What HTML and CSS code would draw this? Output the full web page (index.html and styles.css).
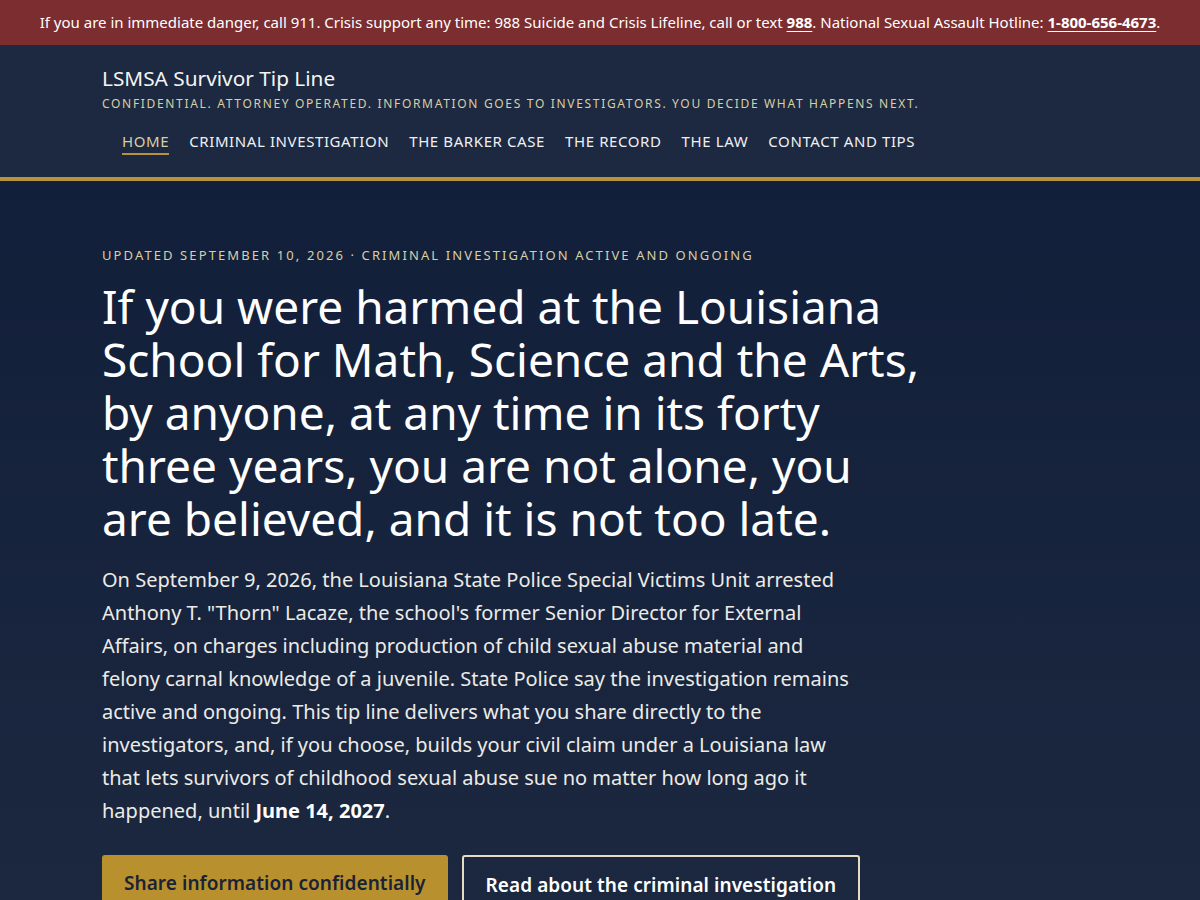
FILE: index.html
```html
<!DOCTYPE html>
<html lang="en">
<head>
<meta charset="utf-8">
<title>LSMSA Survivor Tip Line</title>
<link rel="stylesheet" href="styles.css">
</head>
<body>
<div class="crisis">
  If you are in immediate danger, call 911. Crisis support any time: 988 Suicide and Crisis Lifeline, call or text <a href="#">988</a>. National Sexual Assault Hotline: <a href="#">1-800-656-4673</a>.
</div>
<header class="site-header">
  <div class="container">
    <div class="site-title">LSMSA Survivor Tip Line</div>
    <div class="tagline">Confidential. Attorney operated. Information goes to investigators. You decide what happens next.</div>
    <nav class="main-nav">
      <ul>
        <li><a class="active" href="#">Home</a></li>
        <li><a href="#">Criminal Investigation</a></li>
        <li><a href="#">The Barker Case</a></li>
        <li><a href="#">The Record</a></li>
        <li><a href="#">The Law</a></li>
        <li><a href="#">Contact and Tips</a></li>
      </ul>
    </nav>
  </div>
</header>
<main class="hero">
  <div class="container">
    <p class="eyebrow">Updated September 10, 2026 · Criminal investigation active and ongoing</p>
    <h1>If you were harmed at the Louisiana School for Math, Science and the Arts, by anyone, at any time in its forty three years, you are not alone, you are believed, and it is not too late.</h1>
    <p class="lead">On September 9, 2026, the Louisiana State Police Special Victims Unit arrested Anthony T. "Thorn" Lacaze, the school's former Senior Director for External Affairs, on charges including production of child sexual abuse material and felony carnal knowledge of a juvenile. State Police say the investigation remains active and ongoing. This tip line delivers what you share directly to the investigators, and, if you choose, builds your civil claim under a Louisiana law that lets survivors of childhood sexual abuse sue no matter how long ago it happened, until <strong>June 14, 2027</strong>.</p>
    <div class="actions">
      <a class="btn btn-primary" href="#">Share information confidentially</a>
      <a class="btn btn-outline" href="#">Read about the criminal investigation</a>
    </div>
  </div>
</main>
</body>
</html>
```

FILE: styles.css
```css
* { box-sizing: border-box; }
html, body { margin: 0; padding: 0; }
body {
  font-family: "Noto Sans", "Open Sans", "DejaVu Sans", sans-serif;
  background: #1d2940;
  color: #ffffff;
}
.crisis {
  background: #7b2d2f;
  color: #ffffff;
  text-align: center;
  font-size: 15px;
  line-height: 22px;
  padding: 11px 16px 12px;
}
.crisis a {
  color: #ffffff;
  font-weight: 700;
  text-decoration: underline;
  text-underline-offset: 3px;
}
.container {
  max-width: 996px;
  margin: 0 auto;
}
.site-header {
  background: #1d2940;
  border-bottom: 4px solid #b8923a;
  padding: 19px 0 22px;
}
.site-title {
  font-size: 20.8px;
  line-height: 28px;
  color: #f4f4f4;
}
.tagline {
  margin-top: 3px;
  font-size: 12px;
  line-height: 18px;
  letter-spacing: 1.68px;
  text-transform: uppercase;
  color: #d8cfa6;
}
.main-nav ul {
  list-style: none;
  margin: 17px 0 0;
  padding: 0 0 0 20px;
  display: flex;
  gap: 20px;
}
.main-nav a {
  display: block;
  font-size: 15px;
  line-height: 22px;
  letter-spacing: 0.6px;
  text-transform: uppercase;
  color: #eef0f4;
  text-decoration: none;
  padding-bottom: 1px;
  border-bottom: 2px solid transparent;
}
.main-nav a.active {
  color: #d8cfa6;
  border-bottom-color: #b8923a;
}
.hero {
  background: linear-gradient(180deg, #121f3a 0%, #1d2940 100%);
  padding: 64px 0 80px;
  min-height: 800px;
}
.eyebrow {
  margin: 0;
  font-size: 13px;
  line-height: 20px;
  letter-spacing: 2.1px;
  text-transform: uppercase;
  color: #d8cfa6;
}
h1 {
  margin: 15px 0 0;
  max-width: 822px;
  font-size: 46px;
  line-height: 53px;
  font-weight: 400;
  color: #ffffff;
}
.lead {
  margin: 18px 0 0;
  max-width: 762px;
  font-size: 20px;
  line-height: 33px;
  color: #ecebe6;
}
.lead strong { color: #ffffff; font-weight: 700; }
.actions {
  display: flex;
  gap: 14px;
  margin-top: 28px;
}
.btn {
  display: inline-block;
  font-size: 19px;
  line-height: 24px;
  font-weight: 600;
  letter-spacing: 0.06px;
  text-decoration: none;
  border-radius: 3px;
  padding: 16px 22px;
}
.btn-primary {
  background: #b8902e;
  color: #1a2236;
}
.btn-outline {
  border: 2px solid #e6ddc1;
  color: #ffffff;
  padding: 16px 22px;
}
```
